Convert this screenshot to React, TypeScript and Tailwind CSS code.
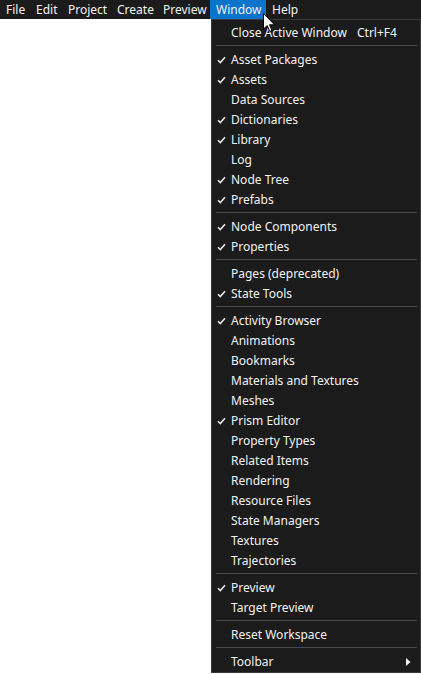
import React from "react";

type Item =
  | { type: "sep" }
  | { type: "item"; label: string; checked?: boolean; shortcut?: string; submenu?: boolean };

const items: Item[] = [
  { type: "item", label: "Close Active Window", shortcut: "Ctrl+F4" },
  { type: "sep" },
  { type: "item", label: "Asset Packages", checked: true },
  { type: "item", label: "Assets", checked: true },
  { type: "item", label: "Data Sources" },
  { type: "item", label: "Dictionaries", checked: true },
  { type: "item", label: "Library", checked: true },
  { type: "item", label: "Log" },
  { type: "item", label: "Node Tree", checked: true },
  { type: "item", label: "Prefabs", checked: true },
  { type: "sep" },
  { type: "item", label: "Node Components", checked: true },
  { type: "item", label: "Properties", checked: true },
  { type: "sep" },
  { type: "item", label: "Pages (deprecated)" },
  { type: "item", label: "State Tools", checked: true },
  { type: "sep" },
  { type: "item", label: "Activity Browser", checked: true },
  { type: "item", label: "Animations" },
  { type: "item", label: "Bookmarks" },
  { type: "item", label: "Materials and Textures" },
  { type: "item", label: "Meshes" },
  { type: "item", label: "Prism Editor", checked: true },
  { type: "item", label: "Property Types" },
  { type: "item", label: "Related Items" },
  { type: "item", label: "Rendering" },
  { type: "item", label: "Resource Files" },
  { type: "item", label: "State Managers" },
  { type: "item", label: "Textures" },
  { type: "item", label: "Trajectories" },
  { type: "sep" },
  { type: "item", label: "Preview", checked: true },
  { type: "item", label: "Target Preview" },
  { type: "sep" },
  { type: "item", label: "Reset Workspace" },
  { type: "sep" },
  { type: "item", label: "Toolbar", submenu: true },
];

const menus = [
  { label: "File", w: "w-[30px]" },
  { label: "Edit", w: "w-[32px]" },
  { label: "Project", w: "w-[49px]" },
  { label: "Create", w: "w-[46px]" },
  { label: "Preview", w: "w-[53px]" },
  { label: "Window", w: "w-[56px]", active: true },
  { label: "Help", w: "w-[40px]" },
];

function Check() {
  return (
    <svg width="9" height="8" viewBox="0 0 9 8" className="block">
      <path d="M1 4.2 L3.3 6.5 L8 1.2" fill="none" stroke="#e8e8e8" strokeWidth="1.6" />
    </svg>
  );
}

export default function App() {
  return (
    <div
      className="relative w-[421px] h-[674px] bg-white overflow-hidden text-[12px] text-[#f2f2f2]"
      style={{ fontFamily: '"Segoe UI", "Noto Sans", "Open Sans", sans-serif' }}
    >
      <div className="flex h-[19px] bg-[#1b1b1b]">
        {menus.map((m) => (
          <div
            key={m.label}
            className={`${m.w} h-[19px] pl-[6px] flex items-center leading-none ${
              m.active ? "bg-[#0a74cc]" : ""
            }`}
          >
            {m.label}
          </div>
        ))}
      </div>

      <div className="absolute left-[211px] top-[19px] w-[210px] h-[654px] bg-[#1b1b1b] border border-[#3a3a3a] pt-[2px]">
        {items.map((it, i) =>
          it.type === "sep" ? (
            <div key={i} className="h-[7px] flex items-center pl-[4px] pr-[3px]">
              <div className="h-px w-full bg-[#4a4a4a]" />
            </div>
          ) : (
            <div key={i} className="relative h-[20px] pt-[2px] flex items-center leading-none">
              <div className="w-[19px] flex justify-start pl-[5px]">{it.checked ? <Check /> : null}</div>
              <div>{it.label}</div>
              {it.shortcut ? <div className="absolute left-[145px]">{it.shortcut}</div> : null}
              {it.submenu ? (
                <svg width="5" height="8" viewBox="0 0 5 8" className="absolute left-[194px] top-[7px]">
                  <path d="M0 0 L4.5 4 L0 8 Z" fill="#f0f0f0" />
                </svg>
              ) : null}
            </div>
          )
        )}
      </div>

      <svg
        width="13"
        height="20"
        viewBox="0 0 13 20"
        className="absolute left-[263px] top-[13px]"
      >
        <path
          d="M0.5 0.5 L0.5 16 L4.2 12.5 L6.8 18.5 L9 17.5 L6.5 11.8 L11.5 11.8 Z"
          fill="#ffffff"
          stroke="#000000"
          strokeWidth="1"
          strokeLinejoin="miter"
        />
      </svg>
    </div>
  );
}
